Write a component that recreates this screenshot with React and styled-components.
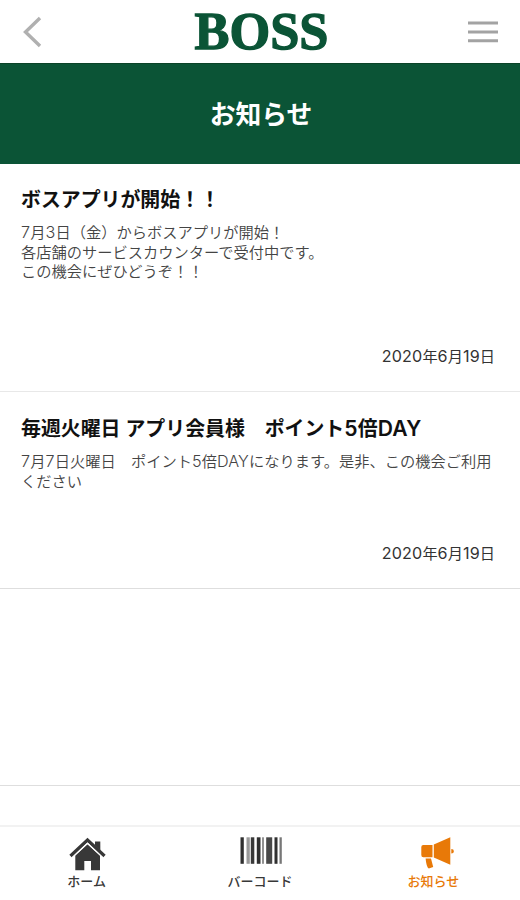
import React from "react";
import styled, { createGlobalStyle } from "styled-components";

const GlobalStyle = createGlobalStyle`
  * { box-sizing: border-box; }
  body { margin: 0; background: #fff; }
`;

const Screen = styled.div`
  width: 520px;
  height: 900px;
  display: flex;
  flex-direction: column;
  overflow: hidden;
  background: #fff;
  color: #111;
  font-family: Inter, "Noto Sans CJK JP", sans-serif;
`;

const Header = styled.header`
  flex: none;
  height: 63px;
  display: flex;
  align-items: center;
  justify-content: space-between;
  padding: 0 22px 0 23px;
`;

const IconButton = styled.button`
  width: 30px;
  height: 63px;
  padding: 0;
  border: 0;
  background: none;
  display: flex;
  align-items: center;
`;

const Logo = styled.svg`
  display: block;
  width: 140px;
  height: 63px;
  overflow: visible;
  fill: #0b5436;
  stroke: #0b5436;
  stroke-width: 1.3px;
  font-family: "Liberation Serif", serif;
  font-weight: 700;
  font-size: 53px;
`;

const Banner = styled.div`
  flex: none;
  height: 101px;
  border-top: 1px solid #0b4328;
  background: #0b5436;
  display: flex;
  align-items: center;
  justify-content: center;
`;

const BannerTitle = styled.h1`
  margin: 2px 0 0 2px;
  color: #fff;
  font-size: 25.8px;
  line-height: 36px;
  font-weight: 600;
`;

const Article = styled.article`
  flex: none;
  height: ${(p) => p.$height}px;
  display: flex;
  flex-direction: column;
  padding: ${(p) => p.$top}px 25px 24px 21px;
  border-bottom: 1px solid ${(p) => p.$line};
`;

const Title = styled.h2`
  margin: 0 0 8px;
  font-size: 19.9px;
  line-height: 30px;
  font-weight: 600;
  color: #111;
  white-space: nowrap;
`;

const Body = styled.p`
  margin: 0;
  font-size: 15.25px;
  line-height: 19.5px;
  font-weight: 350;
  color: #444;
  white-space: pre;
`;

const DateText = styled.time`
  margin-top: auto;
  align-self: flex-end;
  font-size: 15.2px;
  line-height: 20px;
  color: #333;
`;

const LatinRun = styled.span`
  font-size: 1.06em;
  line-height: 1;
  letter-spacing: 0.01em;
`;

const TabBar = styled.nav`
  flex: none;
  margin-top: auto;
  height: 75px;
  border-top: 2px solid #f2f2f2;
  display: grid;
  grid-template-columns: repeat(3, 1fr);
`;

const Tab = styled.div`
  display: flex;
  flex-direction: column;
  align-items: center;
  padding-top: 8px;
  color: ${(p) => (p.$active ? "#e87908" : "#383838")};
  svg { display: block; }
`;

const TabLabel = styled.span`
  margin-top: 1px;
  font-size: 13px;
  line-height: 18px;
  font-weight: 500;
`;

const Mixed = ({ text }) =>
  text
    .split(/([A-Za-z0-9]+)/)
    .map((part, i) => (i % 2 ? <LatinRun key={i}>{part}</LatinRun> : part));

const articles = [
  {
    height: 228,
    top: 21,
    line: "#e8e8e8",
    title: "ボスアプリが開始！！",
    body: "7月3日（金）からボスアプリが開始！\n各店舗のサービスカウンターで受付中です。\nこの機会にぜひどうぞ！！",
    date: "2020年6月19日",
  },
  {
    height: 197,
    top: 22,
    line: "#dedede",
    title: "毎週火曜日 アプリ会員様　ポイント5倍DAY",
    body: "7月7日火曜日　ポイント5倍DAYになります。是非、この機会ご利用\nください",
    date: "2020年6月19日",
  },
  { height: 197, top: 21, line: "#dedede" },
];

const HomeIcon = () => (
  <svg width="38" height="36" viewBox="0 0 38 36" fill="currentColor">
    <path d="M27 6.500h5.300v9L27 10.500z" />
    <path d="M7.300 20.500 19.500 9.300l12.500 11.200v14.800h-9V26h-6.700v9.300h-9z" />
    <path d="M2.500 21 19.500 5l17 16" fill="none" stroke="currentColor" strokeWidth="3.400" />
    <path d="M4.500 22.400 19.500 8.300l15 14.100" fill="none" stroke="#fff" strokeWidth="1.200" />
  </svg>
);

const bars = [
  [0, 3.3, "#303030"], [6, 3.3, "#999"], [10.3, 3.5, "#3a3a3a"], [16.3, 3.7, "#303030"],
  [21.7, 1.6, "#777"], [25.7, 6, "#484848"], [34, 3, "#303030"], [39, 2.3, "#777"],
];

const BarcodeIcon = () => (
  <svg width="42" height="36" viewBox="-1.500 0 42 36" overflow="visible">
    {bars.map(([x, w, fill]) => (
      <rect key={x} x={x} y="2.300" width={w} height="26.500" fill={fill} />
    ))}
  </svg>
);

const HornIcon = () => (
  <svg width="36" height="36" viewBox="-3.800 0 36 36" fill="currentColor" overflow="visible">
    <path d="M4.500 10H13.700v12.200H4.500Q2.500 22.200 2.500 20v-8Q2.500 10 4.500 10zM15 9.600 31.500 2.300v27.400L15 22.400zM32.500 14q2.600 0 2.600 2.300t-2.600 2.300zM6.800 23.600h5.400l2.200 8.400-4.400 1.500q-2.400-1-3.200-9.900z" />
  </svg>
);

const tabs = [
  { label: "ホーム", Icon: HomeIcon },
  { label: "バーコード", Icon: BarcodeIcon },
  { label: "お知らせ", Icon: HornIcon, active: true },
];

export default function App() {
  return (
    <Screen>
      <GlobalStyle />
      <Header>
        <IconButton aria-label="戻る">
          <svg width="20" height="32" viewBox="0 0 20 32" fill="none" stroke="#b0b0b0" strokeWidth="3.400">
            <path d="M17 2 2.500 16 17 30" />
          </svg>
        </IconButton>
        <Logo viewBox="0 0 140 63">
          <text x="3.500" y="49" textLength="134" lengthAdjust="spacingAndGlyphs">BOSS</text>
        </Logo>
        <IconButton aria-label="メニュー">
          <svg width="30" height="24" viewBox="0 0 30 24" fill="#a3a3a3">
            <path d="M0 1.500h30v3H0zM0 10.500h30v3H0zM0 19.200h30v3H0z" />
          </svg>
        </IconButton>
      </Header>
      <Banner>
        <BannerTitle>お知らせ</BannerTitle>
      </Banner>
      {articles.map((a, i) => (
        <Article key={i} $height={a.height} $top={a.top} $line={a.line}>
          {a.title && (
            <>
              <Title><Mixed text={a.title} /></Title>
              <Body><Mixed text={a.body} /></Body>
              <DateText><Mixed text={a.date} /></DateText>
            </>
          )}
        </Article>
      ))}
      <TabBar>
        {tabs.map(({ label, Icon, active }) => (
          <Tab key={label} $active={active}>
            <Icon />
            <TabLabel>{label}</TabLabel>
          </Tab>
        ))}
      </TabBar>
    </Screen>
  );
}
